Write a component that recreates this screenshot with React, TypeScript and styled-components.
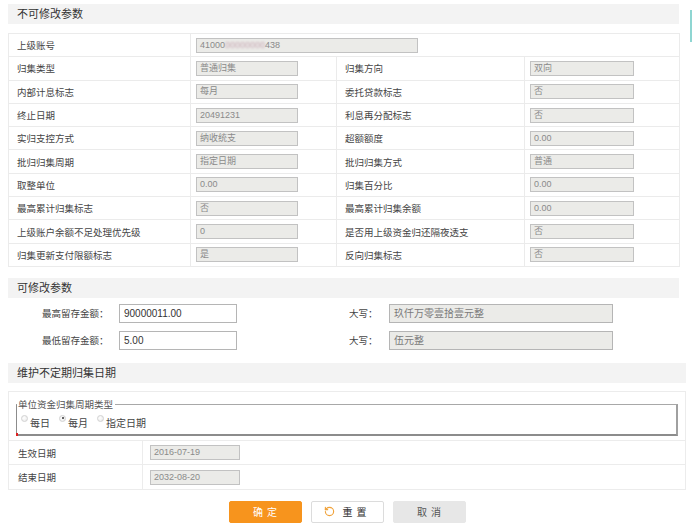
import styled, { createGlobalStyle } from "styled-components";
import { RotateCcw } from "lucide-react";

const GlobalStyle = createGlobalStyle`
  body {
    margin: 0;
    background: #fff;
    font-family: "Liberation Sans", "Noto Sans CJK SC", sans-serif;
    color: #444;
  }
`;

const Page = styled.div`
  position: relative;
  width: 692px;
  height: 532px;
  padding: 4px 0 0 8px;
  box-sizing: border-box;
  overflow: hidden;
`;

const EdgeMark = styled.div`
  position: absolute;
  top: 10px;
  right: 0;
  width: 2px;
  height: 32px;
  background: #8fd6d2;
`;

interface SectionTitleProps {
  $wide?: boolean;
  $gap?: number;
}

const SectionTitle = styled.div<SectionTitleProps>`
  width: ${({ $wide }) => ($wide ? "678px" : "671px")};
  height: 20px;
  margin-top: ${({ $gap }) => $gap ?? 0}px;
  padding-left: 9px;
  box-sizing: border-box;
  line-height: 20px;
  background: #f3f3f3;
  font-size: 11px;
  color: #333;
`;

const ParamTable = styled.table`
  width: 671px;
  margin-top: 9px;
  border-collapse: collapse;
  table-layout: fixed;

  td {
    height: 22.3px;
    padding: 0;
    border: 1px solid #ebebeb;
    font-size: 9.5px;
    color: #444;
  }
`;

const LabelCell = styled.td`
  padding-left: 8px !important;
`;

const ValueCell = styled.td`
  padding-left: 5px !important;
`;

interface BoxProps {
  $width: number;
}

const ReadonlyBox = styled.div<BoxProps>`
  width: ${({ $width }) => $width}px;
  height: 15px;
  padding-left: 3px;
  box-sizing: border-box;
  border: 1px solid #c2c2c2;
  background: #ebebe8;
  font-size: 9px;
  line-height: 13px;
  color: #8a8a8a;
  white-space: nowrap;
  overflow: hidden;
`;

const Masked = styled.span`
  filter: blur(1.2px);
  color: #c9a9b4;
`;

const FormRows = styled.div`
  display: flex;
  flex-direction: column;
  gap: 8px;
  margin-top: 6px;
`;

const FormRow = styled.div`
  display: flex;
  align-items: center;
`;

interface FieldGroupProps {
  $width: number;
}

const FieldGroup = styled.div<FieldGroupProps>`
  display: flex;
  align-items: center;
  width: ${({ $width }) => $width}px;
`;

interface FieldLabelProps {
  $width: number;
  $indent?: number;
}

const FieldLabel = styled.span<FieldLabelProps>`
  width: ${({ $width }) => $width}px;
  padding-left: ${({ $indent }) => $indent ?? 0}px;
  box-sizing: border-box;
  font-size: 9.5px;
  color: #444;
`;

interface FieldBoxProps {
  $width: number;
  $readonly?: boolean;
}

const FieldBox = styled.div<FieldBoxProps>`
  width: ${({ $width }) => $width}px;
  height: 19px;
  padding-left: 4px;
  box-sizing: border-box;
  border: 1px solid #b5b5b5;
  background: ${({ $readonly }) => ($readonly ? "#ebebe8" : "#fff")};
  font-size: 10px;
  line-height: 17px;
  color: ${({ $readonly }) => ($readonly ? "#7a7a7a" : "#333")};
`;

const DatePanel = styled.div`
  width: 678px;
  margin-top: 8px;
  border: 1px solid #ececec;
  box-sizing: border-box;
`;

const FieldsetRow = styled.div`
  height: 48px;
  padding: 7px 7px 0 7px;
  box-sizing: border-box;
`;

const CycleFieldset = styled.fieldset`
  position: relative;
  height: 37px;
  margin: 0;
  padding: 0 4px 2px 4px;
  box-sizing: border-box;
  border-style: solid;
  border-width: 1px 2px 2px 1px;
  border-color: #a8a8a8 #a0a0a0 #8c8c8c #8c8c8c;

  &::after {
    content: "";
    position: absolute;
    left: -1px;
    bottom: -2px;
    width: 2px;
    height: 3px;
    background: #e02020;
  }
`;

const CycleLegend = styled.legend`
  margin-left: -4px;
  padding: 0 2px 0 1px;
  font-size: 9.5px;
  line-height: 12px;
  color: #555;
`;

const RadioGroup = styled.div`
  display: flex;
  align-items: flex-start;
  gap: 9px;
  margin-top: 7px;
`;

const RadioOption = styled.label`
  display: flex;
  align-items: flex-start;
  gap: 2px;
  font-size: 10px;
  color: #444;
  line-height: 12px;
`;

interface RadioDotProps {
  $checked?: boolean;
}

const RadioDot = styled.span<RadioDotProps>`
  position: relative;
  width: 7px;
  height: 7px;
  margin-top: -3px;
  border-radius: 50%;
  border: 1px solid #d2d2d2;
  background: radial-gradient(circle at 40% 40%, #ffffff, #e6e6e6);
  box-sizing: border-box;

  &::after {
    content: "";
    display: ${({ $checked }) => ($checked ? "block" : "none")};
    position: absolute;
    left: 1.5px;
    top: 1.5px;
    width: 2px;
    height: 2px;
    border-radius: 50%;
    background: #333;
  }
`;

const DateRow = styled.div`
  display: flex;
  align-items: center;
  height: 23.5px;
  border-top: 1px solid #ececec;
`;

const DateLabel = styled.div`
  display: flex;
  align-items: center;
  width: 134px;
  height: 100%;
  padding-left: 9px;
  box-sizing: border-box;
  border-right: 1px solid #ececec;
  font-size: 9.5px;
  color: #444;
`;

const DateValue = styled.div`
  padding-left: 7px;
`;

const ButtonBar = styled.div`
  display: flex;
  justify-content: center;
  gap: 9px;
  width: 678px;
  margin-top: 11px;
`;

type ButtonKind = "primary" | "reset" | "cancel";

const buttonColors: Record<ButtonKind, { bg: string; fg: string; border: string }> = {
  primary: { bg: "#f7941d", fg: "#fff", border: "#f7941d" },
  reset: { bg: "#fff", fg: "#333", border: "#dcdcdc" },
  cancel: { bg: "#e7e7e7", fg: "#555", border: "#e7e7e7" },
};

const ActionButton = styled.button<{ $kind: ButtonKind }>`
  display: flex;
  align-items: center;
  justify-content: center;
  gap: 4px;
  width: 73px;
  height: 22px;
  padding: 0;
  border: 1px solid ${({ $kind }) => buttonColors[$kind].border};
  border-radius: 2px;
  background: ${({ $kind }) => buttonColors[$kind].bg};
  color: ${({ $kind }) => buttonColors[$kind].fg};
  font-family: "Noto Sans CJK SC", sans-serif;
  font-size: 10px;
  letter-spacing: 4px;
  text-indent: 4px;
  cursor: pointer;
`;

const fixedRows: [string, string, string, string][] = [
  ["归集类型", "普通归集", "归集方向", "双向"],
  ["内部计息标志", "每月", "委托贷款标志", "否"],
  ["终止日期", "20491231", "利息再分配标志", "否"],
  ["实归支控方式", "纳收统支", "超额额度", "0.00"],
  ["批归归集周期", "指定日期", "批归归集方式", "普通"],
  ["取整单位", "0.00", "归集百分比", "0.00"],
  ["最高累计归集标志", "否", "最高累计归集余额", "0.00"],
  ["上级账户余额不足处理优先级", "0", "是否用上级资金归还隔夜透支", "否"],
  ["归集更新支付限额标志", "是", "反向归集标志", "否"],
];

const App = () => {
  return (
    <Page>
      <GlobalStyle />
      <EdgeMark />

      <SectionTitle>不可修改参数</SectionTitle>
      <ParamTable>
        <colgroup>
          <col style={{ width: 182 }} />
          <col style={{ width: 146 }} />
          <col style={{ width: 188 }} />
          <col style={{ width: 155 }} />
        </colgroup>
        <tbody>
          <tr>
            <LabelCell>上级账号</LabelCell>
            <ValueCell colSpan={3}>
              <ReadonlyBox $width={222}>
                41000<Masked>00000000</Masked>438
              </ReadonlyBox>
            </ValueCell>
          </tr>
          {fixedRows.map(([l1, v1, l2, v2]) => (
            <tr key={l1}>
              <LabelCell>{l1}</LabelCell>
              <ValueCell>
                <ReadonlyBox $width={102}>{v1}</ReadonlyBox>
              </ValueCell>
              <LabelCell>{l2}</LabelCell>
              <ValueCell>
                <ReadonlyBox $width={104}>{v2}</ReadonlyBox>
              </ValueCell>
            </tr>
          ))}
        </tbody>
      </ParamTable>

      <SectionTitle $gap={11}>可修改参数</SectionTitle>
      <FormRows>
        <FormRow>
          <FieldGroup $width={341}>
            <FieldLabel $width={111} $indent={34}>
              最高留存金额：
            </FieldLabel>
            <FieldBox $width={118}>90000011.00</FieldBox>
          </FieldGroup>
          <FieldGroup $width={264}>
            <FieldLabel $width={40}>大写：</FieldLabel>
            <FieldBox $width={224} $readonly>
              玖仟万零壹拾壹元整
            </FieldBox>
          </FieldGroup>
        </FormRow>
        <FormRow>
          <FieldGroup $width={341}>
            <FieldLabel $width={111} $indent={34}>
              最低留存金额：
            </FieldLabel>
            <FieldBox $width={118}>5.00</FieldBox>
          </FieldGroup>
          <FieldGroup $width={264}>
            <FieldLabel $width={40}>大写：</FieldLabel>
            <FieldBox $width={224} $readonly>
              伍元整
            </FieldBox>
          </FieldGroup>
        </FormRow>
      </FormRows>

      <SectionTitle $wide $gap={13}>
        维护不定期归集日期
      </SectionTitle>
      <DatePanel>
        <FieldsetRow>
          <CycleFieldset>
            <CycleLegend>单位资金归集周期类型</CycleLegend>
            <RadioGroup>
              <RadioOption>
                <RadioDot />
                每日
              </RadioOption>
              <RadioOption>
                <RadioDot $checked />
                每月
              </RadioOption>
              <RadioOption>
                <RadioDot />
                指定日期
              </RadioOption>
            </RadioGroup>
          </CycleFieldset>
        </FieldsetRow>
        <DateRow>
          <DateLabel>生效日期</DateLabel>
          <DateValue>
            <ReadonlyBox $width={90}>2016-07-19</ReadonlyBox>
          </DateValue>
        </DateRow>
        <DateRow>
          <DateLabel>结束日期</DateLabel>
          <DateValue>
            <ReadonlyBox $width={90}>2032-08-20</ReadonlyBox>
          </DateValue>
        </DateRow>
      </DatePanel>

      <ButtonBar>
        <ActionButton $kind="primary">确定</ActionButton>
        <ActionButton $kind="reset">
          <RotateCcw size={11} color="#f0a23a" strokeWidth={2.5} />
          重置
        </ActionButton>
        <ActionButton $kind="cancel">取消</ActionButton>
      </ButtonBar>
    </Page>
  );
};

export default App;
